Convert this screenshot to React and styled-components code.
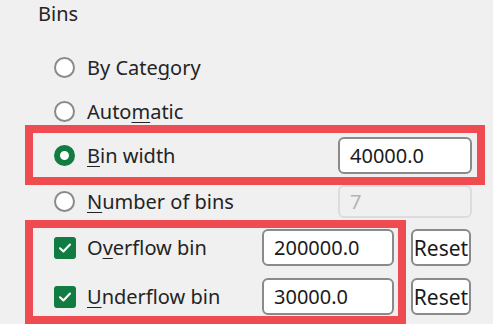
import React from "react";
import styled, { createGlobalStyle } from "styled-components";

const GlobalStyle = createGlobalStyle`
  html, body {
    margin: 0;
    padding: 0;
    background: #f0f0f0;
    overflow: hidden;
  }
  body {
    font-family: "Noto Sans", "Open Sans", sans-serif;
    color: #242424;
  }
`;

const Page = styled.div`
  width: 493px;
  height: 324px;
  display: flex;
  flex-direction: column;
  background: #f0f0f0;
`;

const Title = styled.div`
  height: 28px;
  line-height: 28px;
  padding-left: 38px;
  font-size: 20px;
`;

const OptionRow = styled.div`
  height: 28px;
  display: flex;
  align-items: center;
  gap: 12px;
  padding-left: 54px;
  margin-top: ${(p) => p.$top || 0}px;
  font-size: 20px;
`;

const Highlight = styled.div`
  box-sizing: border-box;
  margin-left: 25px;
  width: ${(p) => p.$width}px;
  border: 8px solid #ee4c50;
  display: flex;
  flex-direction: column;
  gap: ${(p) => p.$gap || 0}px;
  padding: ${(p) => p.$pad || 0}px 0;
`;

const FieldRow = styled.div`
  height: ${(p) => p.$height || 44}px;
  display: flex;
  align-items: center;
  padding-left: 21px;
  padding-right: ${(p) => p.$right || 5}px;
  font-size: 20px;
`;

const PlainFieldRow = styled(FieldRow)`
  margin-left: 33px;
  width: 444px;
  box-sizing: border-box;
`;

const Label = styled.span`
  flex: 1;
  margin-left: ${(p) => p.$gap || 12}px;
  white-space: nowrap;
`;

const Key = styled.u`
  text-decoration: underline;
  text-underline-offset: 3px;
  text-decoration-thickness: 1px;
`;

const Radio = styled.span`
  box-sizing: border-box;
  width: 21px;
  height: 21px;
  border-radius: 50%;
  flex: none;
  background: #fff;
  border: ${(p) => (p.$checked ? "6px solid #107c41" : "2px solid #8a8a8a")};
`;

const Check = styled.span`
  width: 22px;
  height: 22px;
  border-radius: 3px;
  background: #107c41;
  flex: none;
  display: flex;
  align-items: center;
  justify-content: center;
`;

const Input = styled.div`
  box-sizing: border-box;
  width: ${(p) => p.$width || 134}px;
  height: ${(p) => p.$height || 37}px;
  border: 2px solid ${(p) => (p.$disabled ? "#dcdcdc" : "#8a8a8a")};
  border-radius: 6px;
  background: ${(p) => (p.$disabled ? "#f0f0f0" : "#fff")};
  color: ${(p) => (p.$disabled ? "#b4b4b4" : "#1a1a1a")};
  padding-left: 10px;
  display: flex;
  align-items: center;
  font-size: 20px;
  flex: none;
`;

const BottomArea = styled.div`
  display: flex;
  margin-top: 2px;
`;

const ResetColumn = styled.div`
  display: flex;
  flex-direction: column;
  gap: 12px;
  padding-top: 9px;
  margin-left: 5px;
`;

const ResetButton = styled.button`
  box-sizing: border-box;
  width: 60px;
  height: 37px;
  border: 2px solid #8a8a8a;
  border-radius: 6px;
  background: #fff;
  color: #1a1a1a;
  font-family: "Noto Sans", "Open Sans", sans-serif;
  font-size: 21px;
  padding: 0;
  display: flex;
  align-items: center;
  justify-content: center;
`;

const CheckMark = () => (
  <svg width="16" height="16" viewBox="0 0 16 16">
    <path d="M3 8.3 L6.4 11.4 L13 4.6" fill="none" stroke="#fff" strokeWidth="2.1" strokeLinecap="round" strokeLinejoin="round" />
  </svg>
);

export default function App() {
  return (
    <Page>
      <GlobalStyle />
      <Title>Bins</Title>
      <OptionRow $top={25}>
        <Radio />
        <span>By Cate<Key>g</Key>ory</span>
      </OptionRow>
      <OptionRow $top={16}>
        <Radio />
        <span>Auto<Key>m</Key>atic</span>
      </OptionRow>

      <Highlight $width={460}>
        <FieldRow>
          <Radio $checked />
          <Label><Key>B</Key>in width</Label>
          <Input>40000.0</Input>
        </FieldRow>
      </Highlight>

      <PlainFieldRow $height={33}>
        <Radio />
        <Label><Key>N</Key>umber of bins</Label>
        <Input $disabled $height={33}>7</Input>
      </PlainFieldRow>

      <BottomArea>
        <Highlight $width={381} $gap={12} $pad={1}>
          <FieldRow $height={37} $right={4}>
            <Check><CheckMark /></Check>
            <Label $gap={11}>O<Key>v</Key>erflow bin</Label>
            <Input $width={132}>200000.0</Input>
          </FieldRow>
          <FieldRow $height={37} $right={4}>
            <Check><CheckMark /></Check>
            <Label $gap={11}><Key>U</Key>nderflow bin</Label>
            <Input $width={132}>30000.0</Input>
          </FieldRow>
        </Highlight>
        <ResetColumn>
          <ResetButton>Reset</ResetButton>
          <ResetButton>Reset</ResetButton>
        </ResetColumn>
      </BottomArea>
    </Page>
  );
}
